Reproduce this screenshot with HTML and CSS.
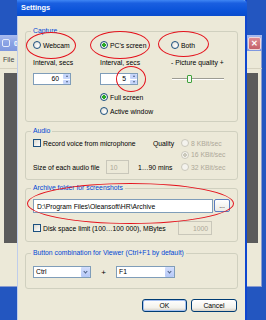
FILE: index.html
```html
<!DOCTYPE html>
<html lang="en">

<head>
  <meta charset="UTF-8">
  <meta name="viewport" content="width=device-width, initial-scale=1.0">
  <title>Settings</title>
  <link rel="stylesheet" href="styles.css">
</head>

<body>
  <div class="desktop">

    <!-- main window behind the dialog -->
    <div class="app-window">
      <div class="app-title">
        <span class="app-icon"></span>
        <span class="app-caption">0</span>
        <span class="app-close">&#x2715;</span>
      </div>
      <div class="app-menu"><span>File</span></div>
      <div class="app-client"></div>
    </div>

    <div class="dialog">
      <div class="dlg-title">Settings</div>
      <div class="dlg-body">

        <fieldset class="group capture">
          <legend>Capture</legend>
          <div class="cap-grid">
            <div class="cap-col">
              <div class="row radio-row"><span class="radio"></span>Webcam</div>
              <div class="row lbl">Interval, secs</div>
              <div class="spin">
                <span class="spin-val">60</span>
                <span class="spin-btns"><span class="spin-up"></span><span class="spin-down"></span></span>
              </div>
            </div>
            <div class="cap-col">
              <div class="row radio-row"><span class="radio checked"></span>PC's screen</div>
              <div class="row lbl">Interval, secs</div>
              <div class="spin">
                <span class="spin-val">5</span>
                <span class="spin-btns"><span class="spin-up"></span><span class="spin-down"></span></span>
              </div>
              <div class="row opt-full"><span class="radio checked"></span>Full screen</div>
              <div class="row opt-active"><span class="radio"></span>Active window</div>
            </div>
            <div class="cap-col">
              <div class="row radio-row"><span class="radio"></span>Both</div>
              <div class="row lbl">- Picture quality +</div>
              <div class="slider">
                <span class="slider-track"></span>
                <span class="slider-thumb"></span>
              </div>
            </div>
          </div>
        </fieldset>

        <fieldset class="group audio">
          <legend>Audio</legend>
          <div class="audio-grid">
            <div class="row"><span class="check"></span>Record voice from microphone</div>
            <div class="row">Quality</div>
            <div class="row disabled"><span class="radio off"></span>8 KBit/sec</div>

            <div class="row"></div>
            <div class="row"></div>
            <div class="row disabled"><span class="radio off checked"></span>16 KBit/sec</div>

            <div class="row size-row">
              <span class="size-label">Size of each audio file</span>
              <span class="box box-size">10</span>
              <span class="mins">1…90 mins</span>
            </div>
            <div class="row disabled"><span class="radio off"></span>32 KBit/sec</div>
          </div>
        </fieldset>

        <fieldset class="group archive">
          <legend>Archive folder for screenshots</legend>
          <div class="path-row">
            <span class="path">D:\Program Files\Oleansoft\HR\Archive</span>
            <span class="browse">...</span>
          </div>
          <div class="disk-row">
            <span class="check"></span>Disk space limit (100…100 000), MBytes
            <span class="box box-disk">1000</span>
          </div>
        </fieldset>

        <fieldset class="group combo-group">
          <legend>Button combination for Viewer (Ctrl+F1 by default)</legend>
          <div class="combo-row">
            <span class="combo combo-ctrl"><span class="combo-text">Ctrl</span><span class="combo-btn"></span></span>
            <span class="plus">+</span>
            <span class="combo combo-key"><span class="combo-text">F1</span><span class="combo-btn"></span></span>
          </div>
        </fieldset>

        <div class="buttons">
          <span class="btn btn-default">OK</span>
          <span class="btn">Cancel</span>
        </div>
      </div>
    </div>

    <!-- red annotation marks drawn over the screenshot -->
    <div class="mark mark-webcam"></div>
    <div class="mark mark-screen"></div>
    <div class="mark mark-both"></div>
    <div class="mark mark-spin"></div>
    <div class="mark mark-archive"></div>
  </div>
</body>

</html>
```

FILE: styles.css
```css
body {
  margin: 0;
  font-family: "Liberation Sans", Arial, sans-serif;
  font-size: 6.8px;
  color: #000;
}

.desktop {
  position: relative;
  width: 266px;
  height: 320px;
  overflow: hidden;
  background: #2356c0;
}

/* window behind */
.app-window {
  position: absolute;
  left: 0;
  top: 35px;
  width: 262px;
  height: 252px;
  background: #ece9d8;
  display: flex;
  flex-direction: column;
  box-shadow: inset -1px -1px 0 #8a9ccf;
}

.app-title {
  height: 16px;
  background: linear-gradient(#a9bbef, #8aa2e4 50%, #7e97df);
  display: flex;
  align-items: center;
  padding: 0 1px 0 2px;
  color: #fff;
  font-size: 7px;
  font-weight: bold;
}

.app-icon {
  width: 6px;
  height: 6px;
  border: 1px solid #e6ecfb;
  border-radius: 2px;
  margin-right: 4px;
}

.app-caption {
  flex: 1;
}

.app-close {
  width: 11px;
  height: 11px;
  border: 1px solid #f1d6d8;
  border-radius: 2px;
  background: linear-gradient(#dc8a92, #c4606a);
  color: #fff;
  font-size: 8px;
  line-height: 11px;
  text-align: center;
}

.app-menu {
  height: 17px;
  padding-left: 3px;
  display: flex;
  align-items: center;
  color: #444;
  font-size: 7px;
  border-bottom: 1px solid #d6d2c0;
}

.app-client {
  height: 170px;
  margin: 4px 4px 0;
  background: #5b5b5b;
}

/* dialog */
.dialog {
  position: absolute;
  left: 17px;
  top: 0;
  width: 230px;
  height: 330px;
  box-sizing: border-box;
  border-left: 1px solid #bfcdeb;
  border-right: 2px solid #0f47cf;
  background: #ece9d8;
}

.dlg-title {
  height: 16px;
  margin: 0 -2px 0 -1px;
  padding-left: 4px;
  border-radius: 0 4px 0 0;
  background: linear-gradient(#3f86f4, #1a5fe0 20%, #0d55da 60%, #0a4ccd);
  color: #fff;
  font-size: 7.4px;
  font-weight: bold;
  line-height: 16px;
}

.dlg-body {
  padding: 11px 7px 0;
}

.group {
  margin: 0;
  border: 1px solid #d0d0bf;
  border-radius: 3px;
  padding: 3px 7px 4px;
  min-width: 0;
}

.group legend {
  color: #0046d5;
  line-height: 8px;
  padding: 0 2px;
  margin-left: -2px;
}

.row {
  display: flex;
  align-items: center;
  white-space: nowrap;
}

/* controls */
.radio {
  width: 8px;
  height: 8px;
  box-sizing: border-box;
  border: 1px solid #1c5180;
  border-radius: 50%;
  background: radial-gradient(circle at 65% 65%, #fff, #dcdad0);
  margin-right: 2px;
  flex: none;
}

.radio.checked {
  background: radial-gradient(circle, #26a926 0 1.6px, transparent 2.1px), radial-gradient(circle at 65% 65%, #fff, #dcdad0);
}

.radio.off {
  border-color: #cac8bb;
  background: #f4f3ee;
}

.radio.off.checked {
  background: radial-gradient(circle, #cac8bb 0 1.6px, transparent 2.1px), #f4f3ee;
}

.check {
  width: 8px;
  height: 8px;
  box-sizing: border-box;
  border: 1px solid #1c5180;
  background: linear-gradient(135deg, #dcdad0, #fff);
  margin-right: 2px;
  flex: none;
}

.disabled {
  color: #aca899;
}

.box {
  height: 14px;
  box-sizing: border-box;
  border: 1px solid #c9c7ba;
  color: #aca899;
  display: flex;
  align-items: center;
  padding-left: 3px;
}

/* capture */
.cap-grid {
  display: grid;
  grid-template-columns: 67px 71px 1fr;
}

.cap-col {
  display: flex;
  flex-direction: column;
}

.radio-row {
  height: 14px;
}

.lbl {
  margin-top: 5px;
  height: 10px;
}

.spin {
  margin-top: 6px;
  width: 38px;
  height: 12px;
  box-sizing: border-box;
  border: 1px solid #7f9db9;
  background: #fff;
  display: flex;
}

.spin-val {
  flex: 1;
  text-align: right;
  padding-right: 4px;
  line-height: 10px;
}

.spin-btns {
  width: 7px;
  display: flex;
  flex-direction: column;
  gap: 1px;
}

.spin-up,
.spin-down {
  flex: 1;
  background: #c6d5fb;
  border-radius: 1px;
  display: flex;
  align-items: center;
  justify-content: center;
}

.spin-up::after {
  content: "";
  border: 1.5px solid transparent;
  border-bottom: 2px solid #4d6185;
  border-top: 0;
}

.spin-down::after {
  content: "";
  border: 1.5px solid transparent;
  border-top: 2px solid #4d6185;
  border-bottom: 0;
}

.opt-full {
  margin-top: 6px;
  height: 12px;
}

.opt-active {
  margin-top: 2px;
  height: 12px;
}

.slider {
  margin-top: 6px;
  width: 52px;
  height: 12px;
  position: relative;
  margin-left: 1px;
}

.slider-track {
  position: absolute;
  left: 0;
  right: 0;
  top: 5px;
  border-top: 1px solid #9d9c93;
  border-bottom: 1px solid #fff;
}

.slider-thumb {
  position: absolute;
  left: 15px;
  top: 2px;
  width: 5px;
  height: 8px;
  box-sizing: border-box;
  border: 1px solid #3fa23d;
  border-radius: 1px;
  background: #f6f5ef;
}

/* audio */
.audio {
  margin-top: 5px;
  padding: 2px 7px 5px;
}

.audio-grid {
  display: grid;
  grid-template-columns: 120px 28px 1fr;
  grid-template-rows: 12px 11px 14px;
}

.size-row {
  grid-column: 1 / 3;
}

.size-label {
  width: 73px;
}

.box-size {
  width: 23px;
}

.mins {
  margin-left: 9px;
}

/* archive */
.archive {
  margin-top: 4px;
  padding: 7px 7px 6px;
}

.path-row {
  display: flex;
  height: 14px;
}

.path {
  width: 180px;
  box-sizing: border-box;
  border: 1px solid #7f9db9;
  background: #fff;
  padding-left: 3px;
  display: flex;
  align-items: center;
  white-space: nowrap;
  overflow: hidden;
}

.browse {
  margin-left: 1px;
  width: 16px;
  height: 13px;
  box-sizing: border-box;
  border: 1px solid #5a7cc0;
  border-radius: 2px;
  background: linear-gradient(#fff, #ecebe4);
  text-align: center;
  line-height: 12px;
}

.disk-row {
  margin-top: 8px;
  height: 14px;
  display: flex;
  align-items: center;
  white-space: nowrap;
}

.box-disk {
  width: 34px;
  margin-left: auto;
  margin-right: 18px;
  justify-content: flex-end;
  padding-right: 3px;
}

/* key combination */
.combo-group {
  margin-top: 7px;
  padding: 9px 7px 10px;
}

.combo-row {
  display: flex;
  align-items: center;
  height: 12px;
}

.combo {
  height: 12px;
  box-sizing: border-box;
  border: 1px solid #7f9db9;
  background: #fff;
  display: flex;
}

.combo-ctrl {
  width: 58px;
}

.combo-key {
  width: 59px;
}

.combo-text {
  flex: 1;
  padding-left: 2px;
  line-height: 10px;
}

.combo-btn {
  width: 9px;
  background: linear-gradient(#d3defc, #b5c8f7);
  border-radius: 1px;
  display: flex;
  align-items: center;
  justify-content: center;
}

.combo-btn::after {
  content: "";
  width: 2px;
  height: 2px;
  border-right: 1px solid #4d6185;
  border-bottom: 1px solid #4d6185;
  transform: translateY(-1px) rotate(45deg);
}

.plus {
  width: 25px;
  text-align: center;
  font-size: 8px;
}

/* dialog buttons */
.buttons {
  margin-top: 10px;
  padding-right: 1px;
  display: flex;
  justify-content: flex-end;
  gap: 4px;
}

.btn {
  width: 46px;
  height: 13px;
  box-sizing: border-box;
  border: 1px solid #003c74;
  border-radius: 3px;
  background: linear-gradient(#fff, #f3f2ec 70%, #d6d0c4);
  text-align: center;
  line-height: 11px;
}

.btn-default {
  width: 45px;
  box-shadow: inset 0 0 0 1px #a6c1f0;
}

/* red annotation ellipses */
.mark {
  position: absolute;
  border: 1.6px solid #e4131d;
  border-radius: 50%;
}

.mark-webcam {
  left: 26px;
  top: 32px;
  width: 48px;
  height: 25px;
}

.mark-screen {
  left: 90px;
  top: 31px;
  width: 58px;
  height: 26px;
}

.mark-both {
  left: 158px;
  top: 31px;
  width: 49px;
  height: 24px;
}

.mark-spin {
  left: 116px;
  top: 66px;
  width: 28px;
  height: 24px;
}

.mark-archive {
  left: 27px;
  top: 183px;
  width: 205px;
  height: 39px;
}
```
